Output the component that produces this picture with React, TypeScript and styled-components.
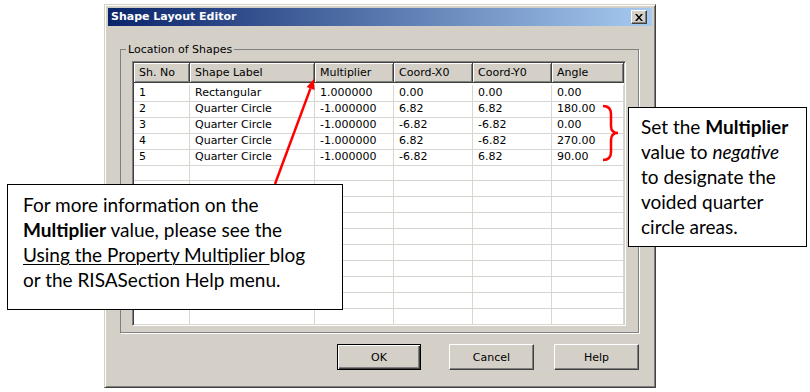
import styled, { createGlobalStyle } from "styled-components";

const GlobalStyle = createGlobalStyle`
  html, body {
    margin: 0;
    padding: 0;
    background: #ffffff;
  }
  * {
    box-sizing: border-box;
  }
`;

interface ShapeRow {
  no: string;
  label: string;
  multiplier: string;
  x0: string;
  y0: string;
  angle: string;
}

const shapes: ShapeRow[] = [
  { no: "1", label: "Rectangular", multiplier: "1.000000", x0: "0.00", y0: "0.00", angle: "0.00" },
  { no: "2", label: "Quarter Circle", multiplier: "-1.000000", x0: "6.82", y0: "6.82", angle: "180.00" },
  { no: "3", label: "Quarter Circle", multiplier: "-1.000000", x0: "-6.82", y0: "-6.82", angle: "0.00" },
  { no: "4", label: "Quarter Circle", multiplier: "-1.000000", x0: "6.82", y0: "-6.82", angle: "270.00" },
  { no: "5", label: "Quarter Circle", multiplier: "-1.000000", x0: "-6.82", y0: "6.82", angle: "90.00" }
];

const headers = ["Sh. No", "Shape Label", "Multiplier", "Coord-X0", "Coord-Y0", "Angle"];
const TOTAL_ROWS = 15;

const App = () => {
  const rows: ShapeRow[] = [...shapes];
  while (rows.length < TOTAL_ROWS) {
    rows.push({ no: "", label: "", multiplier: "", x0: "", y0: "", angle: "" });
  }

  return (
    <Page>
      <GlobalStyle />
      <Dialog>
        <TitleBar>
          <TitleText>Shape Layout Editor</TitleText>
          <CloseButton>
            <svg width="8" height="7" viewBox="0 0 8 7">
              <path
                d="M0 0h2l2 2.5L6 0h2L5 3.5 8 7H6L4 4.5 2 7H0l3-3.5z"
                fill="#000"
              />
            </svg>
          </CloseButton>
        </TitleBar>

        <GroupBox>
          <Legend>Location of Shapes</Legend>
          <Grid>
            <HeaderRow>
              {headers.map((h) => (
                <HeaderCell key={h}>{h}</HeaderCell>
              ))}
            </HeaderRow>
            {rows.map((r, i) => (
              <BodyRow key={i}>
                <Cell>{r.no}</Cell>
                <Cell>{r.label}</Cell>
                <Cell>{r.multiplier}</Cell>
                <Cell>{r.x0}</Cell>
                <Cell>{r.y0}</Cell>
                <Cell>{r.angle}</Cell>
              </BodyRow>
            ))}
          </Grid>
        </GroupBox>

        <ButtonRow>
          <DialogButton $isDefault>OK</DialogButton>
          <DialogButton>Cancel</DialogButton>
          <DialogButton>Help</DialogButton>
        </ButtonRow>
      </Dialog>

      <Overlay width="810" height="392" viewBox="0 0 810 392">
        <line x1="275" y1="184" x2="310.5" y2="88.4" stroke="#ff0000" strokeWidth="2.5" />
        <polygon points="314,79 314.6,89.9 306.6,86.9" fill="#ff0000" />
        <path
          d="M603 106 Q611 106 611 114 L611 126 Q611 133 618 133 Q611 133 611 140 L611 152 Q611 160 603 160"
          fill="none"
          stroke="#ff0000"
          strokeWidth="2.5"
        />
      </Overlay>

      <LeftCallout>
        For more information on the
        <br />
        <b>Multiplier</b> value, please see the
        <br />
        <LinkText>Using the Property Multiplier </LinkText>blog
        <br />
        or the RISASection Help menu.
      </LeftCallout>

      <RightCallout>
        Set the <b>Multiplier</b>
        <br />
        value to <i>negative</i>
        <br />
        to designate the
        <br />
        voided quarter
        <br />
        circle areas.
      </RightCallout>
    </Page>
  );
};

const Page = styled.div`
  position: relative;
  width: 810px;
  height: 392px;
  overflow: hidden;
  padding: 4px 0 0 104px;
  font-family: "DejaVu Sans", Tahoma, sans-serif;
  font-size: 11px;
  color: #000000;
`;

const Dialog = styled.div`
  width: 552px;
  height: 384px;
  display: flex;
  flex-direction: column;
  background: #d4d0c8;
  border: 1px solid;
  border-color: #d4d0c8 #404040 #404040 #d4d0c8;
  box-shadow: inset 1px 1px 0 #ffffff, inset -1px -1px 0 #808080;
  padding: 3px;
`;

const TitleBar = styled.div`
  height: 18px;
  display: flex;
  align-items: center;
  justify-content: space-between;
  padding: 0 5px 0 3px;
  background: linear-gradient(to right, #0a246a, #a6caf0);
`;

const TitleText = styled.span`
  color: #ffffff;
  font-weight: bold;
  font-size: 11px;
  line-height: 18px;
`;

const CloseButton = styled.div`
  width: 16px;
  height: 14px;
  display: flex;
  align-items: center;
  justify-content: center;
  background: #d4d0c8;
  border: 1px solid;
  border-color: #ffffff #404040 #404040 #ffffff;
  box-shadow: inset -1px -1px 0 #808080;
`;

const GroupBox = styled.fieldset`
  margin: 17px 13px 0 12px;
  padding: 0 12px 6px 11px;
  border: 1px solid #808080;
  box-shadow: 1px 1px 0 #ffffff;
  min-width: 0;
`;

const Legend = styled.legend`
  margin-left: -6px;
  padding: 0 2px;
  font-size: 11px;
  line-height: 13px;
`;

const Grid = styled.div`
  margin-top: 5px;
  width: 494px;
  height: 265px;
  background: #ffffff;
  border: 1px solid;
  border-color: #808080 #ffffff #ffffff #808080;
  box-shadow: inset 1px 1px 0 #404040, inset -1px -1px 0 #d4d0c8;
  padding: 1px 2px 2px 1px;
  overflow: hidden;
`;

const columns = "56px 125px 79px 79px 79px 72px";

const HeaderRow = styled.div`
  display: grid;
  grid-template-columns: ${columns};
  height: 20px;
  margin-bottom: 2px;
`;

const HeaderCell = styled.div`
  background: #d4d0c8;
  border-right: 1px solid #404040;
  border-bottom: 1px solid #404040;
  box-shadow: inset 1px 1px 0 #ffffff, inset -1px -1px 0 #808080;
  padding-left: 5px;
  line-height: 19px;
  white-space: nowrap;
`;

const BodyRow = styled.div`
  display: grid;
  grid-template-columns: ${columns};
  height: 16px;
`;

const Cell = styled.div`
  border-right: 1px solid #d8d6d0;
  border-bottom: 1px solid #d8d6d0;
  padding-left: 5px;
  line-height: 16px;
  white-space: nowrap;
`;

const ButtonRow = styled.div`
  display: flex;
  justify-content: flex-end;
  gap: 20px;
  margin-top: 11px;
  padding-right: 13px;
`;

const DialogButton = styled.button<{ $isDefault?: boolean }>`
  width: ${({ $isDefault }) => ($isDefault ? "84px" : "85px")};
  height: 26px;
  margin-right: ${({ $isDefault }) => ($isDefault ? "8px" : "0")};
  padding: 0;
  font-family: "DejaVu Sans", Tahoma, sans-serif;
  font-size: 11px;
  color: #000000;
  background: #d4d0c8;
  border: 1px solid;
  border-color: ${({ $isDefault }) =>
    $isDefault ? "#000000" : "#ffffff #404040 #404040 #ffffff"};
  box-shadow: ${({ $isDefault }) =>
    $isDefault
      ? "inset 1px 1px 0 #ffffff, inset -1px -1px 0 #404040, inset -2px -2px 0 #808080"
      : "inset -1px -1px 0 #808080"};
`;

const Overlay = styled.svg`
  position: absolute;
  left: 0;
  top: 0;
  pointer-events: none;
`;

const Callout = styled.div`
  position: absolute;
  background: #ffffff;
  border: 1px solid #000000;
  font-family: Lato, "Liberation Sans", sans-serif;
  font-size: 19px;
  line-height: 25px;
  color: #000000;
  white-space: nowrap;
`;

const LeftCallout = styled(Callout)`
  left: 7px;
  top: 184px;
  width: 336px;
  height: 126px;
  padding: 7px 0 0 15px;
`;

const RightCallout = styled(Callout)`
  left: 628px;
  top: 107px;
  width: 179px;
  height: 140px;
  padding: 6px 0 0 12px;
`;

const LinkText = styled.span`
  text-decoration: underline;
  text-underline-offset: 2px;
  text-decoration-thickness: 1px;
`;

export default App;
